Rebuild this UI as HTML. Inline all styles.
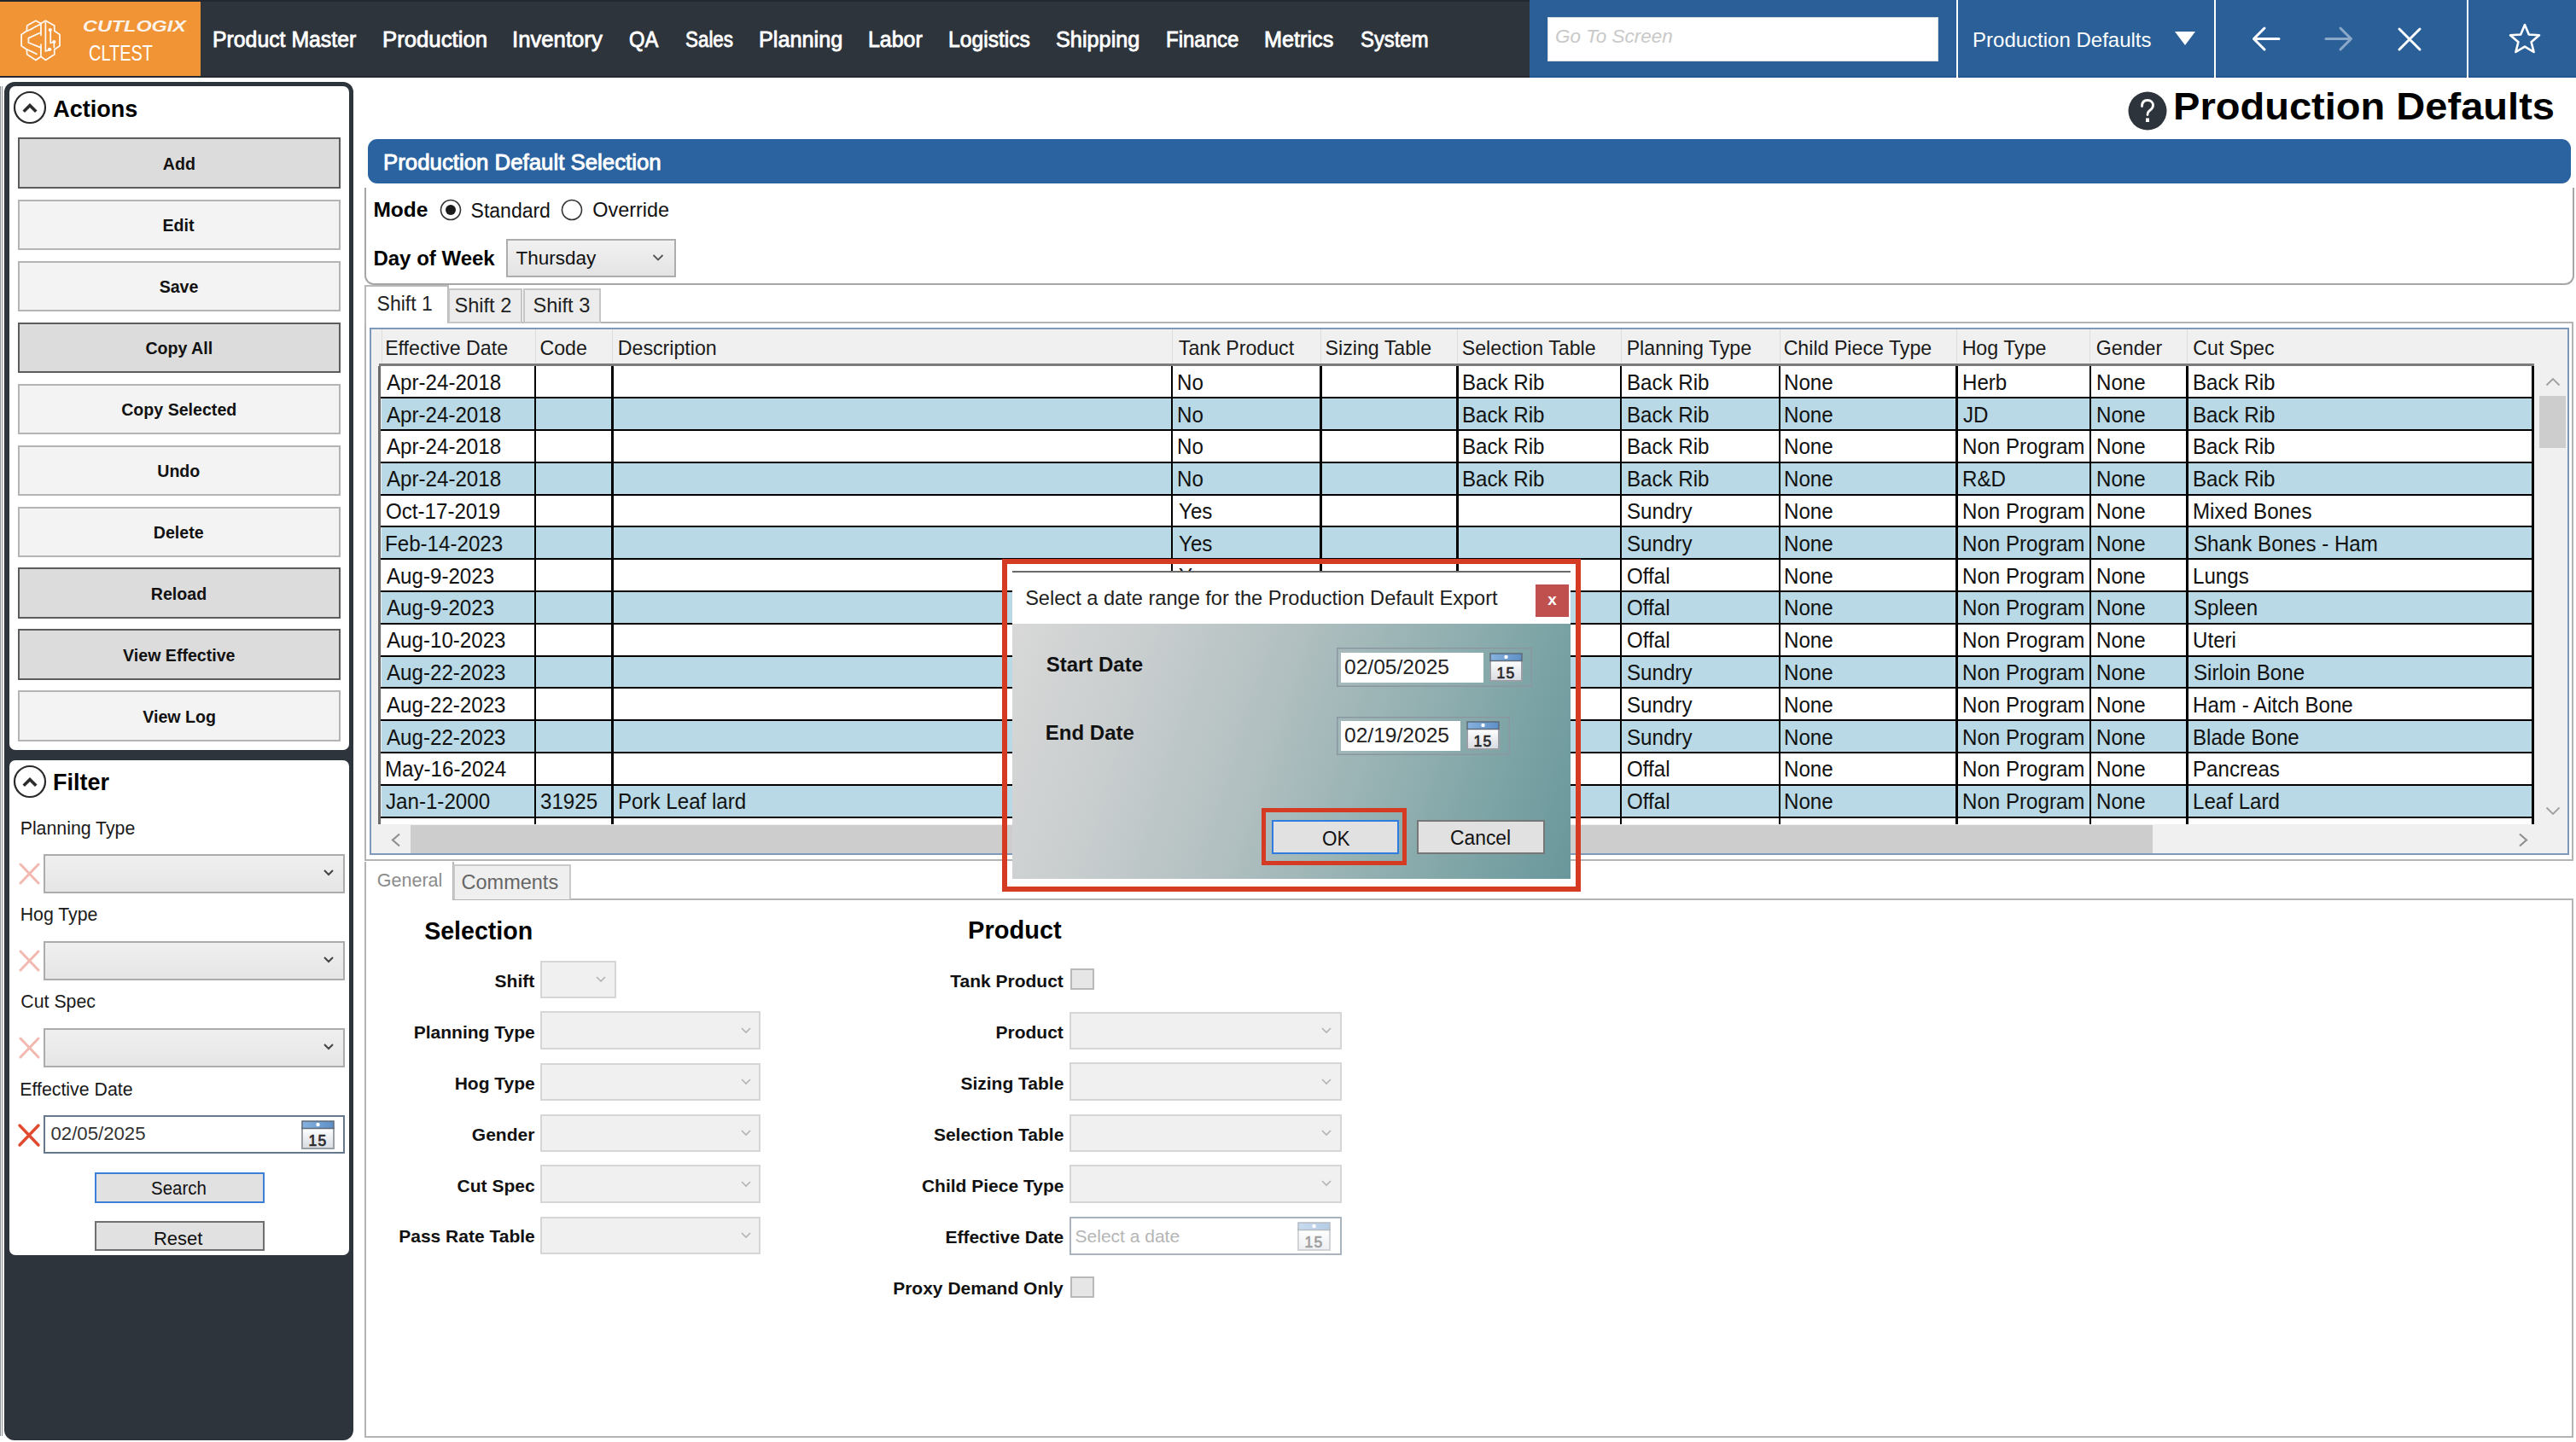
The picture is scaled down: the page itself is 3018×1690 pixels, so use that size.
<!DOCTYPE html>
<html><head><meta charset="utf-8"><title>Production Defaults</title>
<style>
html,body{margin:0;padding:0;width:3018px;height:1690px;overflow:hidden;background:#fff;position:relative;font-family:"Liberation Sans",sans-serif}
.a{position:absolute}
.t{white-space:nowrap}
</style></head><body>
<div class="a" style="left:0px;top:0px;width:3018px;height:91px;background:#2e343b"></div>
<div class="a" style="left:0px;top:0px;width:3018px;height:1.5px;background:#22282e"></div>
<div class="a" style="left:0px;top:1.5px;width:234.5px;height:88px;background:#f09436"></div>
<div class="a" style="left:0px;top:89.3px;width:1792px;height:1.7px;background:#23292f"></div>
<svg class="a" style="left:18px;top:18px" width="60" height="60" viewBox="0 0 1442 1442" fill="none" stroke="#fff" stroke-width="42" stroke-linejoin="round" stroke-linecap="round" opacity="0.95">
<path d="M720,230 L575,150 L330,290 L320,440 L170,540 L170,860 L320,960 L330,1100 L575,1260 L720,1160 L850,1260 L1100,1100 L1100,960 L1250,860 L1250,540 L1100,440 L1100,290 L850,150 Z"/>
<path d="M720,240 L720,560 M720,820 L720,1160"/>
<path d="M720,480 L370,640 L370,770 L720,910"/>
<path d="M340,440 L700,250 M560,320 L440,400"/>
<path d="M330,960 L600,1090 M440,1010 L560,1070"/>
<path d="M850,200 L850,1010 L1000,960 M990,400 L990,780 L1090,740 L1090,900"/>
<circle cx="980" cy="410" r="30" fill="#fff"/><circle cx="1090" cy="745" r="30" fill="#fff"/><circle cx="960" cy="960" r="30" fill="#fff"/>
</svg>
<span class="a t" style="left:97.33px;top:21.65px;font-size:18.3px;line-height:18.3px;font-weight:700;color:#fbf3ea;font-style:italic;transform:scaleX(1.2802);transform-origin:0 0;">CUTLOGIX</span>
<span class="a t" style="left:103.80px;top:49.53px;font-size:25.5px;line-height:25.5px;font-weight:400;color:#fff;transform:scaleX(0.7822);transform-origin:0 0;">CLTEST</span>
<span class="a t" style="left:249.42px;top:34.25px;font-size:25px;line-height:25px;font-weight:400;color:#fff;transform:scaleX(0.9922);transform-origin:0 0;-webkit-text-stroke:0.8px #fff">Product Master</span>
<span class="a t" style="left:447.94px;top:34.25px;font-size:25px;line-height:25px;font-weight:400;color:#fff;transform:scaleX(1.0296);transform-origin:0 0;-webkit-text-stroke:0.8px #fff">Production</span>
<span class="a t" style="left:599.79px;top:34.25px;font-size:25px;line-height:25px;font-weight:400;color:#fff;transform:scaleX(1.0286);transform-origin:0 0;-webkit-text-stroke:0.8px #fff">Inventory</span>
<span class="a t" style="left:737.33px;top:34.25px;font-size:25px;line-height:25px;font-weight:400;color:#fff;transform:scaleX(0.9486);transform-origin:0 0;-webkit-text-stroke:0.8px #fff">QA</span>
<span class="a t" style="left:803.39px;top:34.25px;font-size:25px;line-height:25px;font-weight:400;color:#fff;transform:scaleX(0.8959);transform-origin:0 0;-webkit-text-stroke:0.8px #fff">Sales</span>
<span class="a t" style="left:889.08px;top:34.25px;font-size:25px;line-height:25px;font-weight:400;color:#fff;transform:scaleX(1.0093);transform-origin:0 0;-webkit-text-stroke:0.8px #fff">Planning</span>
<span class="a t" style="left:1017.01px;top:34.25px;font-size:25px;line-height:25px;font-weight:400;color:#fff;transform:scaleX(0.9967);transform-origin:0 0;-webkit-text-stroke:0.8px #fff">Labor</span>
<span class="a t" style="left:1111.33px;top:34.25px;font-size:25px;line-height:25px;font-weight:400;color:#fff;transform:scaleX(0.9865);transform-origin:0 0;-webkit-text-stroke:0.8px #fff">Logistics</span>
<span class="a t" style="left:1237.16px;top:34.25px;font-size:25px;line-height:25px;font-weight:400;color:#fff;transform:scaleX(1.0116);transform-origin:0 0;-webkit-text-stroke:0.8px #fff">Shipping</span>
<span class="a t" style="left:1365.98px;top:34.25px;font-size:25px;line-height:25px;font-weight:400;color:#fff;transform:scaleX(0.9609);transform-origin:0 0;-webkit-text-stroke:0.8px #fff">Finance</span>
<span class="a t" style="left:1481.28px;top:34.25px;font-size:25px;line-height:25px;font-weight:400;color:#fff;transform:scaleX(1.0087);transform-origin:0 0;-webkit-text-stroke:0.8px #fff">Metrics</span>
<span class="a t" style="left:1593.63px;top:34.25px;font-size:25px;line-height:25px;font-weight:400;color:#fff;transform:scaleX(0.9538);transform-origin:0 0;-webkit-text-stroke:0.8px #fff">System</span>
<div class="a" style="left:1792px;top:0px;width:1226px;height:91px;background:#2b5f98"></div>
<div class="a" style="left:1792px;top:89.3px;width:1226px;height:1.7px;background:#235591"></div>
<div class="a" style="left:1813px;top:20px;width:458px;height:52px;background:#fff;box-shadow:inset 0 0 0 1px #d8dde3"></div>
<span class="a t" style="left:1821.88px;top:31.88px;font-size:22.5px;line-height:22.5px;font-weight:400;color:#c9c9c9;font-style:italic;">Go To Screen</span>
<div class="a" style="left:2292px;top:0px;width:2px;height:91px;background:#fff"></div>
<div class="a" style="left:2594px;top:0px;width:2px;height:91px;background:#fff"></div>
<div class="a" style="left:2890px;top:0px;width:2px;height:91px;background:#fff"></div>
<span class="a t" style="left:2311.08px;top:34.60px;font-size:24px;line-height:24px;font-weight:400;color:#fff;">Production Defaults</span>
<svg class="a" style="left:2546px;top:36px" width="28" height="19" viewBox="0 0 28 19"><path d="M2 1 H26 L14 17 Z" fill="#fff"/></svg>
<svg class="a" style="left:2636px;top:28px" width="38" height="35" viewBox="0 0 38 35" fill="none" stroke="#fff" stroke-width="3" stroke-linecap="round" stroke-linejoin="round"><path d="M34 17.5 H6 M17 5 L4.5 17.5 L17 30"/></svg>
<svg class="a" style="left:2721px;top:28px" width="38" height="35" viewBox="0 0 38 35" fill="none" stroke="#8aa9c9" stroke-width="3" stroke-linecap="round" stroke-linejoin="round"><path d="M4 17.5 H32 M21 5 L33.5 17.5 L21 30"/></svg>
<svg class="a" style="left:2806px;top:29px" width="34" height="34" viewBox="0 0 34 34" fill="none" stroke="#fff" stroke-width="3" stroke-linecap="round"><path d="M5 5 L29 29 M29 5 L5 29"/></svg>
<svg class="a" style="left:2936px;top:25px" width="44" height="40" viewBox="0 0 44 40" fill="none" stroke="#fff" stroke-width="2.6" stroke-linejoin="round"><path d="M22 4 L26.8 15.5 L39 16.3 L29.6 24.2 L32.6 36 L22 29.6 L11.4 36 L14.4 24.2 L5 16.3 L17.2 15.5 Z"/></svg>
<div class="a" style="left:0px;top:100.5px;width:1px;height:1582.5px;background:#8c9298"></div>
<div class="a" style="left:2px;top:100.5px;width:1px;height:1582.5px;background:#8c9298"></div>
<div class="a" style="left:5px;top:95.5px;width:409px;height:1592.5px;background:#2e343b;border-radius:12px"></div>
<div class="a" style="left:10.5px;top:101px;width:398px;height:777.5px;background:#fff;border-radius:7px"></div>
<svg class="a" style="left:15px;top:106px" width="40" height="40" viewBox="0 0 40 40" fill="none"><circle cx="20" cy="20" r="18" stroke="#2b2b2b" stroke-width="2.2"/><path d="M14 23.5 L20 17.5 L26 23.5" stroke="#2b2b2b" stroke-width="3.6" stroke-linecap="square"/></svg>
<span class="a t" style="left:62.33px;top:114.65px;font-size:27px;line-height:27px;font-weight:700;color:#000;">Actions</span>
<div class="a" style="left:20.5px;top:161.3px;width:378px;height:59.5px;background:#dcdcdc;box-shadow:inset 0 0 0 2px #5c5c5c"></div>
<span class="a t" style="left:190.83px;top:182.94px;font-size:19.6px;line-height:19.6px;font-weight:700;color:#111;">Add</span>
<div class="a" style="left:20.5px;top:233.5px;width:378px;height:59.5px;background:#f3f3f3;box-shadow:inset 0 0 0 2px #b4b4b4"></div>
<span class="a t" style="left:190.49px;top:255.14px;font-size:19.6px;line-height:19.6px;font-weight:700;color:#111;">Edit</span>
<div class="a" style="left:20.5px;top:305.5px;width:378px;height:59.5px;background:#f3f3f3;box-shadow:inset 0 0 0 2px #b4b4b4"></div>
<span class="a t" style="left:186.67px;top:327.14px;font-size:19.6px;line-height:19.6px;font-weight:700;color:#111;">Save</span>
<div class="a" style="left:20.5px;top:377.5px;width:378px;height:59.5px;background:#dcdcdc;box-shadow:inset 0 0 0 2px #5c5c5c"></div>
<span class="a t" style="left:170.40px;top:399.14px;font-size:19.6px;line-height:19.6px;font-weight:700;color:#111;">Copy All</span>
<div class="a" style="left:20.5px;top:449.5px;width:378px;height:59.5px;background:#f3f3f3;box-shadow:inset 0 0 0 2px #b4b4b4"></div>
<span class="a t" style="left:142.22px;top:471.14px;font-size:19.6px;line-height:19.6px;font-weight:700;color:#111;">Copy Selected</span>
<div class="a" style="left:20.5px;top:521.5px;width:378px;height:59.5px;background:#f3f3f3;box-shadow:inset 0 0 0 2px #b4b4b4"></div>
<span class="a t" style="left:184.26px;top:543.14px;font-size:19.6px;line-height:19.6px;font-weight:700;color:#111;">Undo</span>
<div class="a" style="left:20.5px;top:593.5px;width:378px;height:59.5px;background:#f3f3f3;box-shadow:inset 0 0 0 2px #b4b4b4"></div>
<span class="a t" style="left:179.81px;top:615.14px;font-size:19.6px;line-height:19.6px;font-weight:700;color:#111;">Delete</span>
<div class="a" style="left:20.5px;top:665px;width:378px;height:59.5px;background:#dcdcdc;box-shadow:inset 0 0 0 2px #5c5c5c"></div>
<span class="a t" style="left:176.82px;top:686.64px;font-size:19.6px;line-height:19.6px;font-weight:700;color:#111;">Reload</span>
<div class="a" style="left:20.5px;top:737.4px;width:378px;height:59.5px;background:#dcdcdc;box-shadow:inset 0 0 0 2px #5c5c5c"></div>
<span class="a t" style="left:144.08px;top:759.04px;font-size:19.6px;line-height:19.6px;font-weight:700;color:#111;">View Effective</span>
<div class="a" style="left:20.5px;top:809.3px;width:378px;height:59.5px;background:#f3f3f3;box-shadow:inset 0 0 0 2px #b4b4b4"></div>
<span class="a t" style="left:167.26px;top:830.94px;font-size:19.6px;line-height:19.6px;font-weight:700;color:#111;">View Log</span>
<div class="a" style="left:10.5px;top:891px;width:398px;height:580px;background:#fff;border-radius:7px"></div>
<svg class="a" style="left:15px;top:896px" width="40" height="40" viewBox="0 0 40 40" fill="none"><circle cx="20" cy="20" r="18" stroke="#2b2b2b" stroke-width="2.2"/><path d="M14 23.5 L20 17.5 L26 23.5" stroke="#2b2b2b" stroke-width="3.6" stroke-linecap="square"/></svg>
<span class="a t" style="left:61.95px;top:904.05px;font-size:27px;line-height:27px;font-weight:700;color:#000;">Filter</span>
<span class="a t" style="left:23.70px;top:960.89px;font-size:21.3px;line-height:21.3px;font-weight:400;color:#1a1a1a;">Planning Type</span>
<svg class="a" style="left:21px;top:1010px" width="27" height="28" viewBox="0 0 27 28" fill="none" stroke="#f2b9b0" stroke-width="3" stroke-linecap="round"><path d="M3 3 L24 25 M24 3 L3 25"/></svg>
<div class="a" style="left:50.5px;top:1001px;width:353.5px;height:45.5px;background:linear-gradient(#f0f0f0,#e5e5e5);box-shadow:inset 0 0 0 2px #acacac"></div>
<svg class="a" style="left:378px;top:1017px" width="14" height="12" viewBox="0 0 14 12" fill="none" stroke="#444" stroke-width="2"><path d="M2 3 L7 8 L12 3"/></svg>
<span class="a t" style="left:23.70px;top:1061.89px;font-size:21.3px;line-height:21.3px;font-weight:400;color:#1a1a1a;">Hog Type</span>
<svg class="a" style="left:21px;top:1112.3px" width="27" height="28" viewBox="0 0 27 28" fill="none" stroke="#f2b9b0" stroke-width="3" stroke-linecap="round"><path d="M3 3 L24 25 M24 3 L3 25"/></svg>
<div class="a" style="left:50.5px;top:1103.3px;width:353.5px;height:45.5px;background:linear-gradient(#f0f0f0,#e5e5e5);box-shadow:inset 0 0 0 2px #acacac"></div>
<svg class="a" style="left:378px;top:1119.3px" width="14" height="12" viewBox="0 0 14 12" fill="none" stroke="#444" stroke-width="2"><path d="M2 3 L7 8 L12 3"/></svg>
<span class="a t" style="left:24.33px;top:1163.89px;font-size:21.3px;line-height:21.3px;font-weight:400;color:#1a1a1a;">Cut Spec</span>
<svg class="a" style="left:21px;top:1214.4px" width="27" height="28" viewBox="0 0 27 28" fill="none" stroke="#f2b9b0" stroke-width="3" stroke-linecap="round"><path d="M3 3 L24 25 M24 3 L3 25"/></svg>
<div class="a" style="left:50.5px;top:1205.4px;width:353.5px;height:45.5px;background:linear-gradient(#f0f0f0,#e5e5e5);box-shadow:inset 0 0 0 2px #acacac"></div>
<svg class="a" style="left:378px;top:1221.4px" width="14" height="12" viewBox="0 0 14 12" fill="none" stroke="#444" stroke-width="2"><path d="M2 3 L7 8 L12 3"/></svg>
<span class="a t" style="left:23.30px;top:1266.89px;font-size:21.3px;line-height:21.3px;font-weight:400;color:#1a1a1a;">Effective Date</span>
<svg class="a" style="left:20px;top:1316px" width="28" height="29" viewBox="0 0 28 29" fill="none" stroke="#e04a2e" stroke-width="3.4" stroke-linecap="round"><path d="M3 3 L25 26 M25 3 L3 26"/></svg>
<div class="a" style="left:51px;top:1307px;width:353px;height:45px;background:#fff;box-shadow:inset 0 0 0 2px #66788c"></div>
<span class="a t" style="left:59.51px;top:1318.13px;font-size:22.2px;line-height:22.2px;font-weight:400;color:#333;">02/05/2025</span>
<svg class="a" style="left:353px;top:1313px;" width="39" height="34" viewBox="0 0 39 34">
<defs><linearGradient id="cb" x1="0" x2="1"><stop offset="0" stop-color="#86b2de"/><stop offset="1" stop-color="#5d8fc8"/></linearGradient>
<linearGradient id="cw" x1="0" y1="0" x2="0" y2="1"><stop offset="0" stop-color="#fff"/><stop offset="1" stop-color="#d8dce2"/></linearGradient></defs>
<rect x="1" y="9" width="37" height="24" fill="url(#cw)" stroke="#9a9fa5" stroke-width="2"/>
<rect x="1" y="1" width="37" height="8.5" fill="url(#cb)" stroke="#5f6b78" stroke-width="1.5"/>
<circle cx="19.5" cy="5" r="2.2" fill="#fff"/>
<text x="19.5" y="29.5" text-anchor="middle" font-family="Liberation Sans" font-size="17.5" fill="#2a2a2a" letter-spacing="1.2" stroke="#2a2a2a" stroke-width="0.7">15</text>
</svg>
<div class="a" style="left:111px;top:1373.6px;width:199px;height:36px;background:#e1e1e1;box-shadow:inset 0 0 0 2px #3c80d8"></div>
<span class="a t" style="left:177.08px;top:1382.30px;font-size:22px;line-height:22px;font-weight:400;color:#111;transform:scaleX(0.9299);transform-origin:0 0;">Search</span>
<div class="a" style="left:111px;top:1431px;width:199px;height:35px;background:#e1e1e1;box-shadow:inset 0 0 0 2px #6f6f6f"></div>
<span class="a t" style="left:179.97px;top:1440.80px;font-size:22px;line-height:22px;font-weight:400;color:#111;">Reset</span>
<svg class="a" style="left:2493px;top:107px" width="46" height="46" viewBox="0 0 46 46"><circle cx="23" cy="23" r="22.5" fill="#2e343b"/><path d="M16.5 17.5 C16.5 12.5 19.5 10.5 23 10.5 C27 10.5 29.5 13 29.5 16.5 C29.5 20 27 21.5 25 23 C23.6 24 23 25 23 27.5" fill="none" stroke="#fff" stroke-width="2.8" stroke-linecap="round"/><rect x="21" y="31.5" width="4" height="4.5" fill="#fff"/></svg>
<span class="a t" style="left:2545.94px;top:101.75px;font-size:45px;line-height:45px;font-weight:700;color:#000;transform:scaleX(1.0455);transform-origin:0 0;">Production Defaults</span>
<div class="a" style="left:430.5px;top:162.8px;width:2581px;height:52.4px;background:#2b63a0;border-radius:11px"></div>
<span class="a t" style="left:449.44px;top:177.72px;font-size:25.5px;line-height:25.5px;font-weight:400;color:#fff;transform:scaleX(1.0122);transform-origin:0 0;-webkit-text-stroke:0.9px #fff">Production Default Selection</span>
<div class="a" style="left:426.5px;top:219.5px;width:2589px;height:114px;border:2px solid #a6a6a6;border-top:none;border-radius:0 0 11px 11px;box-sizing:border-box"></div>
<span class="a t" style="left:437.41px;top:234.48px;font-size:24.5px;line-height:24.5px;font-weight:700;color:#000;">Mode</span>
<svg class="a" style="left:515px;top:233px" width="26" height="26" viewBox="0 0 26 26"><circle cx="13" cy="13" r="11.5" fill="#fff" stroke="#333" stroke-width="1.6"/><circle cx="13" cy="13" r="6" fill="#1a1a1a"/></svg>
<span class="a t" style="left:551.57px;top:235.75px;font-size:23px;line-height:23px;font-weight:400;color:#111;">Standard</span>
<svg class="a" style="left:657px;top:233px" width="26" height="26" viewBox="0 0 26 26"><circle cx="13" cy="13" r="11.5" fill="#fff" stroke="#333" stroke-width="1.6"/></svg>
<span class="a t" style="left:694.25px;top:235.41px;font-size:23.4px;line-height:23.4px;font-weight:400;color:#111;">Override</span>
<span class="a t" style="left:437.44px;top:290.80px;font-size:24px;line-height:24px;font-weight:700;color:#000;">Day of Week</span>
<div class="a" style="left:593px;top:280px;width:199px;height:44.5px;background:linear-gradient(#f2f2f2,#e3e3e3);box-shadow:inset 0 0 0 2px #adadad"></div>
<span class="a t" style="left:604.55px;top:292.38px;font-size:22.5px;line-height:22.5px;font-weight:400;color:#111;">Thursday</span>
<svg class="a" style="left:763px;top:296px" width="16" height="12" viewBox="0 0 16 12" fill="none" stroke="#555" stroke-width="1.8"><path d="M2.5 3 L8 8.5 L13.5 3"/></svg>
<div class="a" style="left:426.5px;top:377px;width:2588.5px;height:632px;border:2px solid #b4b4b4;box-sizing:border-box;background:#fff"></div>
<div class="a" style="left:426.5px;top:333.5px;width:99.5px;height:45.5px;background:#fff;border:2px solid #b9b9b9;border-bottom:none;box-sizing:border-box"></div>
<div class="a" style="left:525px;top:338px;width:86.5px;height:40.5px;background:#ececec;border:2px solid #c6c6c6;box-sizing:border-box"></div>
<div class="a" style="left:612.5px;top:338px;width:91.5px;height:40.5px;background:#ececec;border:2px solid #c6c6c6;box-sizing:border-box"></div>
<span class="a t" style="left:441.56px;top:344.75px;font-size:23px;line-height:23px;font-weight:400;color:#222;">Shift 1</span>
<span class="a t" style="left:532.44px;top:346.54px;font-size:23.6px;line-height:23.6px;font-weight:400;color:#222;">Shift 2</span>
<span class="a t" style="left:624.44px;top:346.54px;font-size:23.6px;line-height:23.6px;font-weight:400;color:#222;">Shift 3</span>
<div class="a" style="left:432.5px;top:383.5px;width:2577px;height:618.5px;border:2px solid #7d98b8;box-sizing:border-box;background:#f0f0f0"></div>
<div class="a" style="left:434.5px;top:385.5px;width:2534.5px;height:40.5px;background:#f0f0f0"></div>
<div class="a" style="left:446.5px;top:386px;width:1.2px;height:39px;background:#dedede"></div>
<div class="a" style="left:626.5px;top:386px;width:1.2px;height:39px;background:#dedede"></div>
<div class="a" style="left:717px;top:386px;width:1.2px;height:39px;background:#dedede"></div>
<div class="a" style="left:1372.7px;top:386px;width:1.2px;height:39px;background:#dedede"></div>
<div class="a" style="left:1547px;top:386px;width:1.2px;height:39px;background:#dedede"></div>
<div class="a" style="left:1707px;top:386px;width:1.2px;height:39px;background:#dedede"></div>
<div class="a" style="left:1898.5px;top:386px;width:1.2px;height:39px;background:#dedede"></div>
<div class="a" style="left:2084.5px;top:386px;width:1.2px;height:39px;background:#dedede"></div>
<div class="a" style="left:2292px;top:386px;width:1.2px;height:39px;background:#dedede"></div>
<div class="a" style="left:2448.3px;top:386px;width:1.2px;height:39px;background:#dedede"></div>
<div class="a" style="left:2562px;top:386px;width:1.2px;height:39px;background:#dedede"></div>
<span class="a t" style="left:451.14px;top:396.98px;font-size:23.2px;line-height:23.2px;font-weight:400;color:#1a1a1a;">Effective Date</span>
<span class="a t" style="left:632.44px;top:396.98px;font-size:23.2px;line-height:23.2px;font-weight:400;color:#1a1a1a;">Code</span>
<span class="a t" style="left:723.74px;top:396.98px;font-size:23.2px;line-height:23.2px;font-weight:400;color:#1a1a1a;">Description</span>
<span class="a t" style="left:1380.84px;top:396.98px;font-size:23.2px;line-height:23.2px;font-weight:400;color:#1a1a1a;">Tank Product</span>
<span class="a t" style="left:1552.56px;top:396.98px;font-size:23.2px;line-height:23.2px;font-weight:400;color:#1a1a1a;">Sizing Table</span>
<span class="a t" style="left:1712.76px;top:396.98px;font-size:23.2px;line-height:23.2px;font-weight:400;color:#1a1a1a;">Selection Table</span>
<span class="a t" style="left:1905.64px;top:396.98px;font-size:23.2px;line-height:23.2px;font-weight:400;color:#1a1a1a;">Planning Type</span>
<span class="a t" style="left:2089.64px;top:396.98px;font-size:23.2px;line-height:23.2px;font-weight:400;color:#1a1a1a;">Child Piece Type</span>
<span class="a t" style="left:2298.64px;top:396.98px;font-size:23.2px;line-height:23.2px;font-weight:400;color:#1a1a1a;">Hog Type</span>
<span class="a t" style="left:2455.84px;top:396.98px;font-size:23.2px;line-height:23.2px;font-weight:400;color:#1a1a1a;">Gender</span>
<span class="a t" style="left:2569.24px;top:396.98px;font-size:23.2px;line-height:23.2px;font-weight:400;color:#1a1a1a;">Cut Spec</span>
<div class="a" style="left:446.5px;top:429.4px;width:2527.5px;height:37.8px;background:#ffffff"></div>
<div class="a" style="left:444px;top:465.1px;width:2530px;height:2.1px;background:#000"></div>
<span class="a t" style="left:452.80px;top:435.75px;font-size:25px;line-height:25px;font-weight:400;color:#111;transform:scaleX(0.965);transform-origin:0 0">Apr-24-2018</span>
<span class="a t" style="left:1379.30px;top:435.75px;font-size:25px;line-height:25px;font-weight:400;color:#111;transform:scaleX(0.965);transform-origin:0 0">No</span>
<span class="a t" style="left:1713.00px;top:435.75px;font-size:25px;line-height:25px;font-weight:400;color:#111;transform:scaleX(0.965);transform-origin:0 0">Back Rib</span>
<span class="a t" style="left:1905.50px;top:435.75px;font-size:25px;line-height:25px;font-weight:400;color:#111;transform:scaleX(0.965);transform-origin:0 0">Back Rib</span>
<span class="a t" style="left:2089.60px;top:435.75px;font-size:25px;line-height:25px;font-weight:400;color:#111;transform:scaleX(0.965);transform-origin:0 0">None</span>
<span class="a t" style="left:2298.50px;top:435.75px;font-size:25px;line-height:25px;font-weight:400;color:#111;transform:scaleX(0.965);transform-origin:0 0">Herb</span>
<span class="a t" style="left:2455.50px;top:435.75px;font-size:25px;line-height:25px;font-weight:400;color:#111;transform:scaleX(0.965);transform-origin:0 0">None</span>
<span class="a t" style="left:2569.00px;top:435.75px;font-size:25px;line-height:25px;font-weight:400;color:#111;transform:scaleX(0.965);transform-origin:0 0">Back Rib</span>
<div class="a" style="left:446.5px;top:467.2px;width:2527.5px;height:37.8px;background:#b8d9e5"></div>
<div class="a" style="left:444px;top:502.9px;width:2530px;height:2.1px;background:#000"></div>
<span class="a t" style="left:452.80px;top:473.55px;font-size:25px;line-height:25px;font-weight:400;color:#111;transform:scaleX(0.965);transform-origin:0 0">Apr-24-2018</span>
<span class="a t" style="left:1379.30px;top:473.55px;font-size:25px;line-height:25px;font-weight:400;color:#111;transform:scaleX(0.965);transform-origin:0 0">No</span>
<span class="a t" style="left:1713.00px;top:473.55px;font-size:25px;line-height:25px;font-weight:400;color:#111;transform:scaleX(0.965);transform-origin:0 0">Back Rib</span>
<span class="a t" style="left:1905.50px;top:473.55px;font-size:25px;line-height:25px;font-weight:400;color:#111;transform:scaleX(0.965);transform-origin:0 0">Back Rib</span>
<span class="a t" style="left:2089.60px;top:473.55px;font-size:25px;line-height:25px;font-weight:400;color:#111;transform:scaleX(0.965);transform-origin:0 0">None</span>
<span class="a t" style="left:2300.12px;top:473.55px;font-size:25px;line-height:25px;font-weight:400;color:#111;transform:scaleX(0.965);transform-origin:0 0">JD</span>
<span class="a t" style="left:2455.50px;top:473.55px;font-size:25px;line-height:25px;font-weight:400;color:#111;transform:scaleX(0.965);transform-origin:0 0">None</span>
<span class="a t" style="left:2569.00px;top:473.55px;font-size:25px;line-height:25px;font-weight:400;color:#111;transform:scaleX(0.965);transform-origin:0 0">Back Rib</span>
<div class="a" style="left:446.5px;top:505px;width:2527.5px;height:37.8px;background:#ffffff"></div>
<div class="a" style="left:444px;top:540.7px;width:2530px;height:2.1px;background:#000"></div>
<span class="a t" style="left:452.80px;top:511.35px;font-size:25px;line-height:25px;font-weight:400;color:#111;transform:scaleX(0.965);transform-origin:0 0">Apr-24-2018</span>
<span class="a t" style="left:1379.30px;top:511.35px;font-size:25px;line-height:25px;font-weight:400;color:#111;transform:scaleX(0.965);transform-origin:0 0">No</span>
<span class="a t" style="left:1713.00px;top:511.35px;font-size:25px;line-height:25px;font-weight:400;color:#111;transform:scaleX(0.965);transform-origin:0 0">Back Rib</span>
<span class="a t" style="left:1905.50px;top:511.35px;font-size:25px;line-height:25px;font-weight:400;color:#111;transform:scaleX(0.965);transform-origin:0 0">Back Rib</span>
<span class="a t" style="left:2089.60px;top:511.35px;font-size:25px;line-height:25px;font-weight:400;color:#111;transform:scaleX(0.965);transform-origin:0 0">None</span>
<span class="a t" style="left:2298.50px;top:511.35px;font-size:25px;line-height:25px;font-weight:400;color:#111;transform:scaleX(0.965);transform-origin:0 0">Non Program</span>
<span class="a t" style="left:2455.50px;top:511.35px;font-size:25px;line-height:25px;font-weight:400;color:#111;transform:scaleX(0.965);transform-origin:0 0">None</span>
<span class="a t" style="left:2569.00px;top:511.35px;font-size:25px;line-height:25px;font-weight:400;color:#111;transform:scaleX(0.965);transform-origin:0 0">Back Rib</span>
<div class="a" style="left:446.5px;top:542.8px;width:2527.5px;height:37.8px;background:#b8d9e5"></div>
<div class="a" style="left:444px;top:578.5px;width:2530px;height:2.1px;background:#000"></div>
<span class="a t" style="left:452.80px;top:549.15px;font-size:25px;line-height:25px;font-weight:400;color:#111;transform:scaleX(0.965);transform-origin:0 0">Apr-24-2018</span>
<span class="a t" style="left:1379.30px;top:549.15px;font-size:25px;line-height:25px;font-weight:400;color:#111;transform:scaleX(0.965);transform-origin:0 0">No</span>
<span class="a t" style="left:1713.00px;top:549.15px;font-size:25px;line-height:25px;font-weight:400;color:#111;transform:scaleX(0.965);transform-origin:0 0">Back Rib</span>
<span class="a t" style="left:1905.50px;top:549.15px;font-size:25px;line-height:25px;font-weight:400;color:#111;transform:scaleX(0.965);transform-origin:0 0">Back Rib</span>
<span class="a t" style="left:2089.60px;top:549.15px;font-size:25px;line-height:25px;font-weight:400;color:#111;transform:scaleX(0.965);transform-origin:0 0">None</span>
<span class="a t" style="left:2298.50px;top:549.15px;font-size:25px;line-height:25px;font-weight:400;color:#111;transform:scaleX(0.965);transform-origin:0 0">R&amp;D</span>
<span class="a t" style="left:2455.50px;top:549.15px;font-size:25px;line-height:25px;font-weight:400;color:#111;transform:scaleX(0.965);transform-origin:0 0">None</span>
<span class="a t" style="left:2569.00px;top:549.15px;font-size:25px;line-height:25px;font-weight:400;color:#111;transform:scaleX(0.965);transform-origin:0 0">Back Rib</span>
<div class="a" style="left:446.5px;top:580.6px;width:2527.5px;height:37.8px;background:#ffffff"></div>
<div class="a" style="left:444px;top:616.3px;width:2530px;height:2.1px;background:#000"></div>
<span class="a t" style="left:451.68px;top:586.95px;font-size:25px;line-height:25px;font-weight:400;color:#111;transform:scaleX(0.965);transform-origin:0 0">Oct-17-2019</span>
<span class="a t" style="left:1380.67px;top:586.95px;font-size:25px;line-height:25px;font-weight:400;color:#111;transform:scaleX(0.965);transform-origin:0 0">Yes</span>
<span class="a t" style="left:1906.38px;top:586.95px;font-size:25px;line-height:25px;font-weight:400;color:#111;transform:scaleX(0.965);transform-origin:0 0">Sundry</span>
<span class="a t" style="left:2089.60px;top:586.95px;font-size:25px;line-height:25px;font-weight:400;color:#111;transform:scaleX(0.965);transform-origin:0 0">None</span>
<span class="a t" style="left:2298.50px;top:586.95px;font-size:25px;line-height:25px;font-weight:400;color:#111;transform:scaleX(0.965);transform-origin:0 0">Non Program</span>
<span class="a t" style="left:2455.50px;top:586.95px;font-size:25px;line-height:25px;font-weight:400;color:#111;transform:scaleX(0.965);transform-origin:0 0">None</span>
<span class="a t" style="left:2569.00px;top:586.95px;font-size:25px;line-height:25px;font-weight:400;color:#111;transform:scaleX(0.965);transform-origin:0 0">Mixed Bones</span>
<div class="a" style="left:446.5px;top:618.4px;width:2527.5px;height:37.8px;background:#b8d9e5"></div>
<div class="a" style="left:444px;top:654.1px;width:2530px;height:2.1px;background:#000"></div>
<span class="a t" style="left:450.80px;top:624.75px;font-size:25px;line-height:25px;font-weight:400;color:#111;transform:scaleX(0.965);transform-origin:0 0">Feb-14-2023</span>
<span class="a t" style="left:1380.67px;top:624.75px;font-size:25px;line-height:25px;font-weight:400;color:#111;transform:scaleX(0.965);transform-origin:0 0">Yes</span>
<span class="a t" style="left:1906.38px;top:624.75px;font-size:25px;line-height:25px;font-weight:400;color:#111;transform:scaleX(0.965);transform-origin:0 0">Sundry</span>
<span class="a t" style="left:2089.60px;top:624.75px;font-size:25px;line-height:25px;font-weight:400;color:#111;transform:scaleX(0.965);transform-origin:0 0">None</span>
<span class="a t" style="left:2298.50px;top:624.75px;font-size:25px;line-height:25px;font-weight:400;color:#111;transform:scaleX(0.965);transform-origin:0 0">Non Program</span>
<span class="a t" style="left:2455.50px;top:624.75px;font-size:25px;line-height:25px;font-weight:400;color:#111;transform:scaleX(0.965);transform-origin:0 0">None</span>
<span class="a t" style="left:2569.88px;top:624.75px;font-size:25px;line-height:25px;font-weight:400;color:#111;transform:scaleX(0.965);transform-origin:0 0">Shank Bones - Ham</span>
<div class="a" style="left:446.5px;top:656.2px;width:2527.5px;height:37.8px;background:#ffffff"></div>
<div class="a" style="left:444px;top:691.9px;width:2530px;height:2.1px;background:#000"></div>
<span class="a t" style="left:452.80px;top:662.55px;font-size:25px;line-height:25px;font-weight:400;color:#111;transform:scaleX(0.965);transform-origin:0 0">Aug-9-2023</span>
<span class="a t" style="left:1380.67px;top:662.55px;font-size:25px;line-height:25px;font-weight:400;color:#111;transform:scaleX(0.965);transform-origin:0 0">Yes</span>
<span class="a t" style="left:1906.38px;top:662.55px;font-size:25px;line-height:25px;font-weight:400;color:#111;transform:scaleX(0.965);transform-origin:0 0">Offal</span>
<span class="a t" style="left:2089.60px;top:662.55px;font-size:25px;line-height:25px;font-weight:400;color:#111;transform:scaleX(0.965);transform-origin:0 0">None</span>
<span class="a t" style="left:2298.50px;top:662.55px;font-size:25px;line-height:25px;font-weight:400;color:#111;transform:scaleX(0.965);transform-origin:0 0">Non Program</span>
<span class="a t" style="left:2455.50px;top:662.55px;font-size:25px;line-height:25px;font-weight:400;color:#111;transform:scaleX(0.965);transform-origin:0 0">None</span>
<span class="a t" style="left:2569.00px;top:662.55px;font-size:25px;line-height:25px;font-weight:400;color:#111;transform:scaleX(0.965);transform-origin:0 0">Lungs</span>
<div class="a" style="left:446.5px;top:694px;width:2527.5px;height:37.8px;background:#b8d9e5"></div>
<div class="a" style="left:444px;top:729.7px;width:2530px;height:2.1px;background:#000"></div>
<span class="a t" style="left:452.80px;top:700.35px;font-size:25px;line-height:25px;font-weight:400;color:#111;transform:scaleX(0.965);transform-origin:0 0">Aug-9-2023</span>
<span class="a t" style="left:1380.67px;top:700.35px;font-size:25px;line-height:25px;font-weight:400;color:#111;transform:scaleX(0.965);transform-origin:0 0">Yes</span>
<span class="a t" style="left:1906.38px;top:700.35px;font-size:25px;line-height:25px;font-weight:400;color:#111;transform:scaleX(0.965);transform-origin:0 0">Offal</span>
<span class="a t" style="left:2089.60px;top:700.35px;font-size:25px;line-height:25px;font-weight:400;color:#111;transform:scaleX(0.965);transform-origin:0 0">None</span>
<span class="a t" style="left:2298.50px;top:700.35px;font-size:25px;line-height:25px;font-weight:400;color:#111;transform:scaleX(0.965);transform-origin:0 0">Non Program</span>
<span class="a t" style="left:2455.50px;top:700.35px;font-size:25px;line-height:25px;font-weight:400;color:#111;transform:scaleX(0.965);transform-origin:0 0">None</span>
<span class="a t" style="left:2569.88px;top:700.35px;font-size:25px;line-height:25px;font-weight:400;color:#111;transform:scaleX(0.965);transform-origin:0 0">Spleen</span>
<div class="a" style="left:446.5px;top:731.8px;width:2527.5px;height:37.8px;background:#ffffff"></div>
<div class="a" style="left:444px;top:767.5px;width:2530px;height:2.1px;background:#000"></div>
<span class="a t" style="left:452.80px;top:738.15px;font-size:25px;line-height:25px;font-weight:400;color:#111;transform:scaleX(0.965);transform-origin:0 0">Aug-10-2023</span>
<span class="a t" style="left:1380.67px;top:738.15px;font-size:25px;line-height:25px;font-weight:400;color:#111;transform:scaleX(0.965);transform-origin:0 0">Yes</span>
<span class="a t" style="left:1906.38px;top:738.15px;font-size:25px;line-height:25px;font-weight:400;color:#111;transform:scaleX(0.965);transform-origin:0 0">Offal</span>
<span class="a t" style="left:2089.60px;top:738.15px;font-size:25px;line-height:25px;font-weight:400;color:#111;transform:scaleX(0.965);transform-origin:0 0">None</span>
<span class="a t" style="left:2298.50px;top:738.15px;font-size:25px;line-height:25px;font-weight:400;color:#111;transform:scaleX(0.965);transform-origin:0 0">Non Program</span>
<span class="a t" style="left:2455.50px;top:738.15px;font-size:25px;line-height:25px;font-weight:400;color:#111;transform:scaleX(0.965);transform-origin:0 0">None</span>
<span class="a t" style="left:2569.12px;top:738.15px;font-size:25px;line-height:25px;font-weight:400;color:#111;transform:scaleX(0.965);transform-origin:0 0">Uteri</span>
<div class="a" style="left:446.5px;top:769.6px;width:2527.5px;height:37.8px;background:#b8d9e5"></div>
<div class="a" style="left:444px;top:805.3px;width:2530px;height:2.1px;background:#000"></div>
<span class="a t" style="left:452.80px;top:775.95px;font-size:25px;line-height:25px;font-weight:400;color:#111;transform:scaleX(0.965);transform-origin:0 0">Aug-22-2023</span>
<span class="a t" style="left:1380.67px;top:775.95px;font-size:25px;line-height:25px;font-weight:400;color:#111;transform:scaleX(0.965);transform-origin:0 0">Yes</span>
<span class="a t" style="left:1906.38px;top:775.95px;font-size:25px;line-height:25px;font-weight:400;color:#111;transform:scaleX(0.965);transform-origin:0 0">Sundry</span>
<span class="a t" style="left:2089.60px;top:775.95px;font-size:25px;line-height:25px;font-weight:400;color:#111;transform:scaleX(0.965);transform-origin:0 0">None</span>
<span class="a t" style="left:2298.50px;top:775.95px;font-size:25px;line-height:25px;font-weight:400;color:#111;transform:scaleX(0.965);transform-origin:0 0">Non Program</span>
<span class="a t" style="left:2455.50px;top:775.95px;font-size:25px;line-height:25px;font-weight:400;color:#111;transform:scaleX(0.965);transform-origin:0 0">None</span>
<span class="a t" style="left:2569.88px;top:775.95px;font-size:25px;line-height:25px;font-weight:400;color:#111;transform:scaleX(0.965);transform-origin:0 0">Sirloin Bone</span>
<div class="a" style="left:446.5px;top:807.4px;width:2527.5px;height:37.8px;background:#ffffff"></div>
<div class="a" style="left:444px;top:843.1px;width:2530px;height:2.1px;background:#000"></div>
<span class="a t" style="left:452.80px;top:813.75px;font-size:25px;line-height:25px;font-weight:400;color:#111;transform:scaleX(0.965);transform-origin:0 0">Aug-22-2023</span>
<span class="a t" style="left:1380.67px;top:813.75px;font-size:25px;line-height:25px;font-weight:400;color:#111;transform:scaleX(0.965);transform-origin:0 0">Yes</span>
<span class="a t" style="left:1906.38px;top:813.75px;font-size:25px;line-height:25px;font-weight:400;color:#111;transform:scaleX(0.965);transform-origin:0 0">Sundry</span>
<span class="a t" style="left:2089.60px;top:813.75px;font-size:25px;line-height:25px;font-weight:400;color:#111;transform:scaleX(0.965);transform-origin:0 0">None</span>
<span class="a t" style="left:2298.50px;top:813.75px;font-size:25px;line-height:25px;font-weight:400;color:#111;transform:scaleX(0.965);transform-origin:0 0">Non Program</span>
<span class="a t" style="left:2455.50px;top:813.75px;font-size:25px;line-height:25px;font-weight:400;color:#111;transform:scaleX(0.965);transform-origin:0 0">None</span>
<span class="a t" style="left:2569.00px;top:813.75px;font-size:25px;line-height:25px;font-weight:400;color:#111;transform:scaleX(0.965);transform-origin:0 0">Ham - Aitch Bone</span>
<div class="a" style="left:446.5px;top:845.2px;width:2527.5px;height:37.8px;background:#b8d9e5"></div>
<div class="a" style="left:444px;top:880.9px;width:2530px;height:2.1px;background:#000"></div>
<span class="a t" style="left:452.80px;top:851.55px;font-size:25px;line-height:25px;font-weight:400;color:#111;transform:scaleX(0.965);transform-origin:0 0">Aug-22-2023</span>
<span class="a t" style="left:1380.67px;top:851.55px;font-size:25px;line-height:25px;font-weight:400;color:#111;transform:scaleX(0.965);transform-origin:0 0">Yes</span>
<span class="a t" style="left:1906.38px;top:851.55px;font-size:25px;line-height:25px;font-weight:400;color:#111;transform:scaleX(0.965);transform-origin:0 0">Sundry</span>
<span class="a t" style="left:2089.60px;top:851.55px;font-size:25px;line-height:25px;font-weight:400;color:#111;transform:scaleX(0.965);transform-origin:0 0">None</span>
<span class="a t" style="left:2298.50px;top:851.55px;font-size:25px;line-height:25px;font-weight:400;color:#111;transform:scaleX(0.965);transform-origin:0 0">Non Program</span>
<span class="a t" style="left:2455.50px;top:851.55px;font-size:25px;line-height:25px;font-weight:400;color:#111;transform:scaleX(0.965);transform-origin:0 0">None</span>
<span class="a t" style="left:2569.00px;top:851.55px;font-size:25px;line-height:25px;font-weight:400;color:#111;transform:scaleX(0.965);transform-origin:0 0">Blade Bone</span>
<div class="a" style="left:446.5px;top:883px;width:2527.5px;height:37.8px;background:#ffffff"></div>
<div class="a" style="left:444px;top:918.7px;width:2530px;height:2.1px;background:#000"></div>
<span class="a t" style="left:450.80px;top:889.35px;font-size:25px;line-height:25px;font-weight:400;color:#111;transform:scaleX(0.965);transform-origin:0 0">May-16-2024</span>
<span class="a t" style="left:1380.67px;top:889.35px;font-size:25px;line-height:25px;font-weight:400;color:#111;transform:scaleX(0.965);transform-origin:0 0">Yes</span>
<span class="a t" style="left:1906.38px;top:889.35px;font-size:25px;line-height:25px;font-weight:400;color:#111;transform:scaleX(0.965);transform-origin:0 0">Offal</span>
<span class="a t" style="left:2089.60px;top:889.35px;font-size:25px;line-height:25px;font-weight:400;color:#111;transform:scaleX(0.965);transform-origin:0 0">None</span>
<span class="a t" style="left:2298.50px;top:889.35px;font-size:25px;line-height:25px;font-weight:400;color:#111;transform:scaleX(0.965);transform-origin:0 0">Non Program</span>
<span class="a t" style="left:2455.50px;top:889.35px;font-size:25px;line-height:25px;font-weight:400;color:#111;transform:scaleX(0.965);transform-origin:0 0">None</span>
<span class="a t" style="left:2569.00px;top:889.35px;font-size:25px;line-height:25px;font-weight:400;color:#111;transform:scaleX(0.965);transform-origin:0 0">Pancreas</span>
<div class="a" style="left:446.5px;top:920.8px;width:2527.5px;height:37.8px;background:#b8d9e5"></div>
<div class="a" style="left:444px;top:956.5px;width:2530px;height:2.1px;background:#000"></div>
<span class="a t" style="left:452.43px;top:927.15px;font-size:25px;line-height:25px;font-weight:400;color:#111;transform:scaleX(0.965);transform-origin:0 0">Jan-1-2000</span>
<span class="a t" style="left:632.50px;top:927.15px;font-size:25px;line-height:25px;font-weight:400;color:#111;transform:scaleX(0.965);transform-origin:0 0">31925</span>
<span class="a t" style="left:723.80px;top:927.15px;font-size:25px;line-height:25px;font-weight:400;color:#111;transform:scaleX(0.965);transform-origin:0 0">Pork Leaf lard</span>
<span class="a t" style="left:1380.67px;top:927.15px;font-size:25px;line-height:25px;font-weight:400;color:#111;transform:scaleX(0.965);transform-origin:0 0">Yes</span>
<span class="a t" style="left:1906.38px;top:927.15px;font-size:25px;line-height:25px;font-weight:400;color:#111;transform:scaleX(0.965);transform-origin:0 0">Offal</span>
<span class="a t" style="left:2089.60px;top:927.15px;font-size:25px;line-height:25px;font-weight:400;color:#111;transform:scaleX(0.965);transform-origin:0 0">None</span>
<span class="a t" style="left:2298.50px;top:927.15px;font-size:25px;line-height:25px;font-weight:400;color:#111;transform:scaleX(0.965);transform-origin:0 0">Non Program</span>
<span class="a t" style="left:2455.50px;top:927.15px;font-size:25px;line-height:25px;font-weight:400;color:#111;transform:scaleX(0.965);transform-origin:0 0">None</span>
<span class="a t" style="left:2569.00px;top:927.15px;font-size:25px;line-height:25px;font-weight:400;color:#111;transform:scaleX(0.965);transform-origin:0 0">Leaf Lard</span>
<div class="a" style="left:446.5px;top:958.6px;width:2522px;height:7.4px;background:#fff"></div>
<div class="a" style="left:444px;top:425.5px;width:2525px;height:3px;background:#7b7b7b"></div>
<div class="a" style="left:434.5px;top:428.5px;width:9.5px;height:537.5px;background:#f0f0f0"></div>
<div class="a" style="left:443px;top:428.5px;width:3px;height:537.5px;background:#6b6b6b"></div>
<div class="a" style="left:625.9px;top:428.5px;width:2.2px;height:537.5px;background:#000"></div>
<div class="a" style="left:716.4px;top:428.5px;width:2.2px;height:537.5px;background:#000"></div>
<div class="a" style="left:1372.1px;top:428.5px;width:2.2px;height:537.5px;background:#000"></div>
<div class="a" style="left:1546.4px;top:428.5px;width:2.2px;height:537.5px;background:#000"></div>
<div class="a" style="left:1706.4px;top:428.5px;width:2.2px;height:537.5px;background:#000"></div>
<div class="a" style="left:1897.9px;top:428.5px;width:2.2px;height:537.5px;background:#000"></div>
<div class="a" style="left:2083.9px;top:428.5px;width:2.2px;height:537.5px;background:#000"></div>
<div class="a" style="left:2291.4px;top:428.5px;width:2.2px;height:537.5px;background:#000"></div>
<div class="a" style="left:2447.7px;top:428.5px;width:2.2px;height:537.5px;background:#000"></div>
<div class="a" style="left:2561.4px;top:428.5px;width:2.2px;height:537.5px;background:#000"></div>
<div class="a" style="left:2966.4px;top:428.5px;width:2.2px;height:537.5px;background:#000"></div>
<div class="a" style="left:2969px;top:385.5px;width:38.5px;height:580.5px;background:#f0f0f0"></div>
<div class="a" style="left:2975px;top:464px;width:31px;height:60.5px;background:#cdcdcd"></div>
<svg class="a" style="left:2981px;top:440px" width="20" height="14" viewBox="0 0 20 14" fill="none" stroke="#a0a0a0" stroke-width="1.8"><path d="M2.5 11.5 L10 4 L17.5 11.5"/></svg>
<svg class="a" style="left:2981px;top:944px" width="20" height="14" viewBox="0 0 20 14" fill="none" stroke="#a0a0a0" stroke-width="1.8"><path d="M2.5 2.5 L10 10 L17.5 2.5"/></svg>
<div class="a" style="left:434.5px;top:966px;width:2573px;height:34px;background:#f0f0f0"></div>
<div class="a" style="left:481px;top:967px;width:2041px;height:33px;background:#cdcdcd"></div>
<svg class="a" style="left:457px;top:976px" width="14" height="17" viewBox="0 0 14 17" fill="none" stroke="#8f8f8f" stroke-width="2.2"><path d="M11 1.5 L3 8.5 L11 15.5"/></svg>
<svg class="a" style="left:2949px;top:976px" width="14" height="17" viewBox="0 0 14 17" fill="none" stroke="#8f8f8f" stroke-width="2.2"><path d="M3 1.5 L11 8.5 L3 15.5"/></svg>
<div class="a" style="left:426.5px;top:1053px;width:2588.5px;height:631.5px;border:2px solid #b4b4b4;box-sizing:border-box;background:#fff"></div>
<div class="a" style="left:426.5px;top:1009.5px;width:105.5px;height:45.5px;background:#fff;border:2px solid #b4b4b4;border-bottom:none;border-top:none;box-sizing:border-box"></div>
<div class="a" style="left:531px;top:1013px;width:137.5px;height:41px;background:#efefef;border:2px solid #c9c9c9;border-bottom:none;box-sizing:border-box"></div>
<span class="a t" style="left:441.82px;top:1022.32px;font-size:21.5px;line-height:21.5px;font-weight:400;color:#8c8c8c;">General</span>
<span class="a t" style="left:540.53px;top:1022.73px;font-size:23.5px;line-height:23.5px;font-weight:400;color:#666;">Comments</span>
<span class="a t" style="left:497.14px;top:1076.69px;font-size:28.6px;line-height:28.6px;font-weight:700;color:#000;">Selection</span>
<span class="a t" style="left:1134.12px;top:1076.35px;font-size:29px;line-height:29px;font-weight:700;color:#000;">Product</span>
<span class="a t" style="left:579.59px;top:1138.65px;font-size:21px;line-height:21px;font-weight:700;color:#111;">Shift</span>
<div class="a" style="left:632.7px;top:1125.5px;width:89px;height:44.5px;background:#f0f0f0;box-shadow:inset 0 0 0 2px #d6d6d6"></div>
<svg class="a" style="left:696.7px;top:1142.75px" width="14" height="10" viewBox="0 0 14 10" fill="none" stroke="#b3b3b3" stroke-width="1.6"><path d="M2 2 L7 7 L12 2"/></svg>
<span class="a t" style="left:484.77px;top:1198.55px;font-size:21px;line-height:21px;font-weight:700;color:#111;">Planning Type</span>
<div class="a" style="left:632.7px;top:1185.3px;width:258.8px;height:44.5px;background:#f0f0f0;box-shadow:inset 0 0 0 2px #d6d6d6"></div>
<svg class="a" style="left:866.5px;top:1202.55px" width="14" height="10" viewBox="0 0 14 10" fill="none" stroke="#b3b3b3" stroke-width="1.6"><path d="M2 2 L7 7 L12 2"/></svg>
<span class="a t" style="left:532.65px;top:1258.65px;font-size:21px;line-height:21px;font-weight:700;color:#111;">Hog Type</span>
<div class="a" style="left:632.7px;top:1245.5px;width:258.8px;height:44.5px;background:#f0f0f0;box-shadow:inset 0 0 0 2px #d6d6d6"></div>
<svg class="a" style="left:866.5px;top:1262.75px" width="14" height="10" viewBox="0 0 14 10" fill="none" stroke="#b3b3b3" stroke-width="1.6"><path d="M2 2 L7 7 L12 2"/></svg>
<span class="a t" style="left:552.82px;top:1318.95px;font-size:21px;line-height:21px;font-weight:700;color:#111;">Gender</span>
<div class="a" style="left:632.7px;top:1305.6px;width:258.8px;height:44.5px;background:#f0f0f0;box-shadow:inset 0 0 0 2px #d6d6d6"></div>
<svg class="a" style="left:866.5px;top:1322.85px" width="14" height="10" viewBox="0 0 14 10" fill="none" stroke="#b3b3b3" stroke-width="1.6"><path d="M2 2 L7 7 L12 2"/></svg>
<span class="a t" style="left:535.60px;top:1378.65px;font-size:21px;line-height:21px;font-weight:700;color:#111;">Cut Spec</span>
<div class="a" style="left:632.7px;top:1365.3px;width:258.8px;height:44.5px;background:#f0f0f0;box-shadow:inset 0 0 0 2px #d6d6d6"></div>
<svg class="a" style="left:866.5px;top:1382.55px" width="14" height="10" viewBox="0 0 14 10" fill="none" stroke="#b3b3b3" stroke-width="1.6"><path d="M2 2 L7 7 L12 2"/></svg>
<span class="a t" style="left:467.24px;top:1438.35px;font-size:21px;line-height:21px;font-weight:700;color:#111;">Pass Rate Table</span>
<div class="a" style="left:632.7px;top:1425.5px;width:258.8px;height:44.5px;background:#f0f0f0;box-shadow:inset 0 0 0 2px #d6d6d6"></div>
<svg class="a" style="left:866.5px;top:1442.75px" width="14" height="10" viewBox="0 0 14 10" fill="none" stroke="#b3b3b3" stroke-width="1.6"><path d="M2 2 L7 7 L12 2"/></svg>
<span class="a t" style="left:1113.19px;top:1138.95px;font-size:21px;line-height:21px;font-weight:700;color:#111;">Tank Product</span>
<div class="a" style="left:1254px;top:1135.3px;width:28px;height:25px;background:#e6e6e6;box-shadow:inset 0 0 0 2px #b9b9b9"></div>
<span class="a t" style="left:1166.53px;top:1198.65px;font-size:21px;line-height:21px;font-weight:700;color:#111;">Product</span>
<div class="a" style="left:1253px;top:1185.6px;width:318.5px;height:44.5px;background:#f0f0f0;box-shadow:inset 0 0 0 2px #d6d6d6"></div>
<svg class="a" style="left:1546.5px;top:1202.85px" width="14" height="10" viewBox="0 0 14 10" fill="none" stroke="#b3b3b3" stroke-width="1.6"><path d="M2 2 L7 7 L12 2"/></svg>
<span class="a t" style="left:1125.38px;top:1258.65px;font-size:21px;line-height:21px;font-weight:700;color:#111;">Sizing Table</span>
<div class="a" style="left:1253px;top:1245.3px;width:318.5px;height:44.5px;background:#f0f0f0;box-shadow:inset 0 0 0 2px #d6d6d6"></div>
<svg class="a" style="left:1546.5px;top:1262.55px" width="14" height="10" viewBox="0 0 14 10" fill="none" stroke="#b3b3b3" stroke-width="1.6"><path d="M2 2 L7 7 L12 2"/></svg>
<span class="a t" style="left:1093.88px;top:1318.65px;font-size:21px;line-height:21px;font-weight:700;color:#111;">Selection Table</span>
<div class="a" style="left:1253px;top:1305.5px;width:318.5px;height:44.5px;background:#f0f0f0;box-shadow:inset 0 0 0 2px #d6d6d6"></div>
<svg class="a" style="left:1546.5px;top:1322.75px" width="14" height="10" viewBox="0 0 14 10" fill="none" stroke="#b3b3b3" stroke-width="1.6"><path d="M2 2 L7 7 L12 2"/></svg>
<span class="a t" style="left:1079.91px;top:1378.65px;font-size:21px;line-height:21px;font-weight:700;color:#111;">Child Piece Type</span>
<div class="a" style="left:1253px;top:1365px;width:318.5px;height:44.5px;background:#f0f0f0;box-shadow:inset 0 0 0 2px #d6d6d6"></div>
<svg class="a" style="left:1546.5px;top:1382.25px" width="14" height="10" viewBox="0 0 14 10" fill="none" stroke="#b3b3b3" stroke-width="1.6"><path d="M2 2 L7 7 L12 2"/></svg>
<span class="a t" style="left:1107.42px;top:1438.65px;font-size:21px;line-height:21px;font-weight:700;color:#111;">Effective Date</span>
<div class="a" style="left:1253px;top:1425.8px;width:318.5px;height:45.5px;background:#fff;box-shadow:inset 0 0 0 2px #a9b4bf"></div>
<span class="a t" style="left:1259.56px;top:1438.35px;font-size:21px;line-height:21px;font-weight:400;color:#b5b5b5;">Select a date</span>
<svg class="a" style="left:1520px;top:1432px;opacity:0.45;" width="39" height="34" viewBox="0 0 39 34">
<defs><linearGradient id="cb" x1="0" x2="1"><stop offset="0" stop-color="#86b2de"/><stop offset="1" stop-color="#5d8fc8"/></linearGradient>
<linearGradient id="cw" x1="0" y1="0" x2="0" y2="1"><stop offset="0" stop-color="#fff"/><stop offset="1" stop-color="#d8dce2"/></linearGradient></defs>
<rect x="1" y="9" width="37" height="24" fill="url(#cw)" stroke="#9a9fa5" stroke-width="2"/>
<rect x="1" y="1" width="37" height="8.5" fill="url(#cb)" stroke="#5f6b78" stroke-width="1.5"/>
<circle cx="19.5" cy="5" r="2.2" fill="#fff"/>
<text x="19.5" y="29.5" text-anchor="middle" font-family="Liberation Sans" font-size="17.5" fill="#2a2a2a" letter-spacing="1.2" stroke="#2a2a2a" stroke-width="0.7">15</text>
</svg>
<span class="a t" style="left:1046.20px;top:1499.15px;font-size:21px;line-height:21px;font-weight:700;color:#111;">Proxy Demand Only</span>
<div class="a" style="left:1254px;top:1495.5px;width:28px;height:25px;background:#e6e6e6;box-shadow:inset 0 0 0 2px #b9b9b9"></div>
<div class="a" style="left:1186px;top:669px;width:654px;height:361px;background:#fff"></div>
<div class="a" style="left:1186px;top:669px;width:654px;height:2px;background:#6a6a6a"></div>
<span class="a t" style="left:1201.14px;top:689.94px;font-size:23.6px;line-height:23.6px;font-weight:400;color:#1e1e1e;">Select a date range for the Production Default Export</span>
<div class="a" style="left:1799.4px;top:685px;width:38.6px;height:38px;background:#c0504d"></div>
<span class="a t" style="left:1813.18px;top:693.35px;font-size:19px;line-height:19px;font-weight:700;color:#fff;">x</span>
<div class="a" style="left:1186px;top:731px;width:654px;height:299px;background:linear-gradient(108deg,#d8d8d8 0%,#c8cdce 22%,#b1bfc0 45%,#93b0b1 68%,#7ba3a5 85%,#6a979b 100%)"></div>
<span class="a t" style="left:1225.68px;top:766.70px;font-size:24px;line-height:24px;font-weight:700;color:#111;">Start Date</span>
<span class="a t" style="left:1224.84px;top:846.80px;font-size:24px;line-height:24px;font-weight:700;color:#111;">End Date</span>
<div class="a" style="left:1566.3px;top:759.4px;width:228.7px;height:45.2px;box-shadow:inset 0 0 0 1.5px #8b97a0"></div>
<div class="a" style="left:1571.3px;top:764.7px;width:166.9px;height:34.9px;background:#fff"></div>
<span class="a t" style="left:1575.02px;top:770.07px;font-size:24.5px;line-height:24.5px;font-weight:400;color:#222;transform:scaleX(1.0028);transform-origin:0 0;">02/05/2025</span>
<svg class="a" style="left:1745px;top:765.1999999999999px;" width="39" height="34" viewBox="0 0 39 34">
<defs><linearGradient id="cb" x1="0" x2="1"><stop offset="0" stop-color="#86b2de"/><stop offset="1" stop-color="#5d8fc8"/></linearGradient>
<linearGradient id="cw" x1="0" y1="0" x2="0" y2="1"><stop offset="0" stop-color="#fff"/><stop offset="1" stop-color="#d8dce2"/></linearGradient></defs>
<rect x="1" y="9" width="37" height="24" fill="url(#cw)" stroke="#9a9fa5" stroke-width="2"/>
<rect x="1" y="1" width="37" height="8.5" fill="url(#cb)" stroke="#5f6b78" stroke-width="1.5"/>
<circle cx="19.5" cy="5" r="2.2" fill="#fff"/>
<text x="19.5" y="29.5" text-anchor="middle" font-family="Liberation Sans" font-size="17.5" fill="#2a2a2a" letter-spacing="1.2" stroke="#2a2a2a" stroke-width="0.7">15</text>
</svg>
<div class="a" style="left:1566.3px;top:839.5px;width:202.7px;height:45.2px;box-shadow:inset 0 0 0 1.5px #8b97a0"></div>
<div class="a" style="left:1571.3px;top:844.8px;width:140.1px;height:34.9px;background:#fff"></div>
<span class="a t" style="left:1575.02px;top:850.17px;font-size:24.5px;line-height:24.5px;font-weight:400;color:#222;transform:scaleX(1.0028);transform-origin:0 0;">02/19/2025</span>
<svg class="a" style="left:1718px;top:845.3px;" width="39" height="34" viewBox="0 0 39 34">
<defs><linearGradient id="cb" x1="0" x2="1"><stop offset="0" stop-color="#86b2de"/><stop offset="1" stop-color="#5d8fc8"/></linearGradient>
<linearGradient id="cw" x1="0" y1="0" x2="0" y2="1"><stop offset="0" stop-color="#fff"/><stop offset="1" stop-color="#d8dce2"/></linearGradient></defs>
<rect x="1" y="9" width="37" height="24" fill="url(#cw)" stroke="#9a9fa5" stroke-width="2"/>
<rect x="1" y="1" width="37" height="8.5" fill="url(#cb)" stroke="#5f6b78" stroke-width="1.5"/>
<circle cx="19.5" cy="5" r="2.2" fill="#fff"/>
<text x="19.5" y="29.5" text-anchor="middle" font-family="Liberation Sans" font-size="17.5" fill="#2a2a2a" letter-spacing="1.2" stroke="#2a2a2a" stroke-width="0.7">15</text>
</svg>
<div class="a" style="left:1490px;top:961.3px;width:149.2px;height:39.3px;background:#e1e1e1;box-shadow:inset 0 0 0 2px #2f7be0"></div>
<span class="a t" style="left:1548.69px;top:970.60px;font-size:24px;line-height:24px;font-weight:400;color:#111;transform:scaleX(0.9382);transform-origin:0 0;">OK</span>
<div class="a" style="left:1660.4px;top:961.3px;width:149.2px;height:39.3px;background:#e1e1e1;box-shadow:inset 0 0 0 2px #777"></div>
<span class="a t" style="left:1699.26px;top:971.02px;font-size:23.5px;line-height:23.5px;font-weight:400;color:#111;transform:scaleX(0.9718);transform-origin:0 0;">Cancel</span>
<div class="a" style="left:1478px;top:946.7px;width:170px;height:67px;border:5.5px solid #d43b22;box-sizing:border-box"></div>
<div class="a" style="left:1174px;top:655px;width:678px;height:390px;border:6px solid #d43b22;box-sizing:border-box"></div>
</body></html>
